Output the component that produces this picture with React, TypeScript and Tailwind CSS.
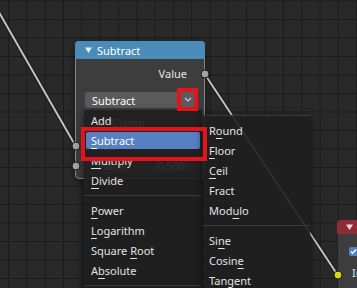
import React from "react";

type Entry = { label: string; u?: number; active?: boolean } | "sep";

const mathMenu: Entry[] = [
  { label: "Add" },
  { label: "Subtract", u: 0, active: true },
  { label: "Multiply", u: 0 },
  { label: "Divide", u: 0 },
  "sep",
  { label: "Power", u: 0 },
  { label: "Logarithm", u: 0 },
  { label: "Square Root", u: 7 },
  { label: "Absolute", u: 1 },
  "sep",
];

const roundMenu: Entry[] = [
  { label: "Round", u: 1 },
  { label: "Floor", u: 0 },
  { label: "Ceil", u: 0 },
  { label: "Fract" },
  { label: "Modulo", u: 3 },
  "sep",
  { label: "Sine", u: 2 },
  { label: "Cosine", u: 5 },
  { label: "Tangent" },
];

function Label({ text, u }: { text: string; u?: number }) {
  if (u === undefined) return <span className="whitespace-pre">{text}</span>;
  return (
    <span className="whitespace-pre">
      {text.slice(0, u)}
      <span className="underline decoration-1 underline-offset-[3px]">{text[u]}</span>
      {text.slice(u + 1)}
    </span>
  );
}

function MenuList({ items, inset }: { items: Entry[]; inset: string }) {
  return (
    <>
      {items.map((item, i) =>
        item === "sep" ? (
          <div key={i} className="h-[10px] flex items-center">
            <div className="h-px w-full bg-[#3b3b3b]" />
          </div>
        ) : (
          <div key={i} className="h-5 flex items-center px-[2px]">
            <div
              className={`h-[17px] w-full flex items-center rounded-[2px] ${inset} ${
                item.active ? "bg-[#5680c2] text-white" : "text-[#e2e2e2]"
              }`}
            >
              <Label text={item.label} u={item.u} />
            </div>
          </div>
        )
      )}
    </>
  );
}

function Socket({ className }: { className: string }) {
  return (
    <div
      className={`absolute w-[9px] h-[9px] -translate-x-1/2 -translate-y-1/2 rounded-full border border-[#1a1a1a] ${className}`}
    />
  );
}

export default function App() {
  return (
    <div className="relative w-[357px] h-[288px] overflow-hidden bg-[#292929] bg-[linear-gradient(to_right,#1c1c1c_1px,transparent_1px),linear-gradient(to_bottom,#1c1c1c_1px,transparent_1px)] [background-size:18.33px_18.5px] [background-position:8px_0.5px] font-['Noto_Sans',sans-serif] text-[11px] leading-none">
      {/* wires */}
      <svg className="absolute inset-0" width="357" height="288" viewBox="0 0 357 288">
        <g strokeLinecap="round">
          <line x1="-4" y1="7" x2="75" y2="145" stroke="#1a1a1a" strokeWidth="4" />
          <line x1="-4" y1="7" x2="75" y2="145" stroke="#c4c4c4" strokeWidth="2" />
          <line x1="204" y1="73" x2="337" y2="274" stroke="#1a1a1a" strokeWidth="4" />
          <line x1="204" y1="73" x2="337" y2="274" stroke="#c4c4c4" strokeWidth="2" />
        </g>
      </svg>

      {/* Math node */}
      <div className="absolute left-[75px] top-[41px] w-[130px] h-[138px] rounded-[4px] border border-[#858585] bg-[#3d3d3d] text-[#e6e6e6] shadow-[0_2px_6px_rgba(0,0,0,0.45)]">
        <div className="h-[18px] -mx-px -mt-px rounded-t-[4px] bg-[#4b8bba] flex items-center pl-[10px] gap-[5px] text-white">
          <svg width="7" height="6" viewBox="0 0 7 6">
            <path d="M0 0.5h7L3.5 6z" fill="#e8eef4" />
          </svg>
          <span>Subtract</span>
        </div>
        <div className="mt-[4px] h-5 flex items-center justify-end pr-[17px]">Value</div>
        <div className="mt-[9px] ml-[9px] mr-[7px] h-4 rounded-[3px] bg-[#5b5b5b] flex items-center pl-[7px] text-white">
          Subtract
        </div>
        <div className="mt-[4px] h-5 flex items-center gap-[6px] pl-[19px]">
          <div className="w-[11px] h-[11px] rounded-[2px] bg-[#5a5a5a]" />
          <span>Clamp</span>
        </div>
        <div className="mt-[3px] h-5 flex items-center pl-[11px]">Value</div>
        <div className="mt-[2px] ml-[9px] mr-[7px] h-4 rounded-[8px] bg-[#555555] flex items-center justify-between px-[12px]">
          <span>Value:</span>
          <span>0.500</span>
        </div>
        <Socket className="left-[129px] top-[32px] bg-[#a3a3a3]" />
        <Socket className="left-0 top-[104px] bg-[#a3a3a3]" />
        <Socket className="left-0 top-[124px] bg-[#a3a3a3]" />
      </div>

      {/* node at bottom right */}
      <div className="absolute left-[337px] top-[220px] w-[60px] h-[90px] rounded-[4px] border border-[#202020] bg-[#3d3d3d] text-[#e6e6e6]">
        <div className="h-[14px] -mx-px -mt-px rounded-t-[4px] bg-[#8d2c37] flex items-center pl-[9px]">
          <svg width="7" height="6" viewBox="0 0 7 6">
            <path d="M0 0.5h7L3.5 6z" fill="#e8d8da" />
          </svg>
        </div>
        <div className="mt-[13px] ml-[11px] w-[9px] h-[9px] rounded-[2px] bg-[#5680c2] flex items-center justify-center">
          <svg width="7" height="7" viewBox="0 0 7 7">
            <path d="M1 3.5l1.7 1.8L6 1.5" fill="none" stroke="white" strokeWidth="1.3" />
          </svg>
        </div>
        <div className="mt-[11px] pl-[14px]">Input</div>
        <Socket className="left-0 top-[54px] bg-[#d9d617]" />
      </div>

      {/* math operation menu */}
      <div className="absolute left-[84px] top-[110px] w-[118px] h-[190px] bg-[#1f1f1fe8] shadow-[0_3px_8px_rgba(0,0,0,0.6)]">
        <MenuList items={mathMenu} inset="px-[5px]" />
      </div>
      <div className="absolute left-[203px] top-[115px] w-[107px] h-[190px] pt-[4px] border-t border-[#3a3a3a] bg-[#1f1f1fe8] shadow-[0_3px_8px_rgba(0,0,0,0.6)]">
        <MenuList items={roundMenu} inset="px-[4px]" />
      </div>

      {/* annotation boxes */}
      <div className="absolute left-[177px] top-[88px] w-[21px] h-[23px] border-[4px] border-[#e3141c] bg-[#5b5b5b] flex items-center justify-center">
        <svg width="8" height="5" viewBox="0 0 8 5">
          <path d="M1 1l3 3 3-3" fill="none" stroke="#d0d0d0" strokeWidth="1.2" />
        </svg>
      </div>
      <div className="absolute left-[81px] top-[127px] w-[126px] h-[34px] border-[4px] border-[#e3141c]" />
    </div>
  );
}
